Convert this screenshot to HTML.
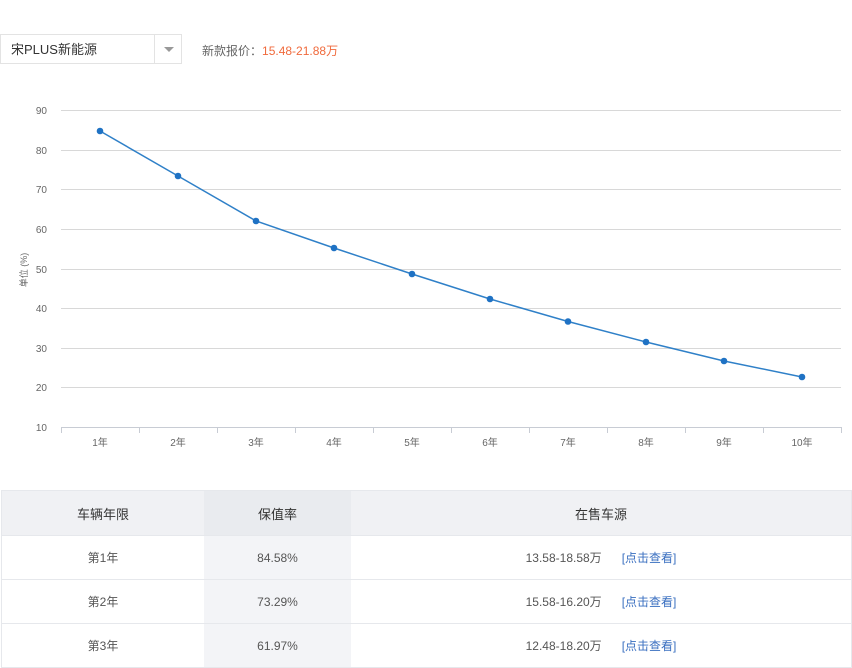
<!DOCTYPE html>
<html><head><meta charset="utf-8"><style>
body{margin:0;width:852px;height:668px;background:#fff;font-family:"Liberation Sans","Noto Sans CJK SC",sans-serif;position:relative;overflow:hidden;color:#333}
.sel{position:absolute;left:0;top:34px;width:182px;height:30px;border:1px solid #e3e3e3;font-size:13px;line-height:30px;box-sizing:border-box}
.sel span{position:absolute;left:10px;top:0}
.sel .ar{position:absolute;left:153px;top:0;width:29px;height:28px;border-left:1px solid #e3e3e3}
.sel .ar:after{content:"";position:absolute;left:9px;top:12px;border:5px solid transparent;border-top:5px solid #999}
.price{position:absolute;left:202px;top:42px;font-size:12px;color:#666}
.price b{font-weight:normal;color:#f06a3c}
table{position:absolute;left:1px;top:490px;border-collapse:collapse;width:851px;font-size:12px;color:#555}
td{border-top:1px solid #e6e8ec;border-bottom:1px solid #e6e8ec;text-align:center;height:43px;padding:0}
tr.h td{background:#f0f1f4;color:#333;font-size:13px;height:44px}
td.c2{background:#f3f4f7;width:147px}
tr.h td.c2{background:#e9ebef}
td.c1{width:202px;border-left:1px solid #e6e8ec}
td.c3{border-right:1px solid #e6e8ec}
a{color:#3a6fc0;text-decoration:none;margin-left:20px}
</style></head><body>
<div class="sel"><span>宋PLUS新能源</span><div class="ar"></div></div>
<div class="price">新款报价：<b>15.48-21.88万</b></div>
<svg style="position:absolute;left:0;top:0" width="852" height="470" font-family="Liberation Sans,Noto Sans CJK SC,sans-serif" font-size="10" fill="#666">
<g stroke="#d8d8d8" stroke-width="1">
<line x1="61" x2="841" y1="110.5" y2="110.5"/><line x1="61" x2="841" y1="150.5" y2="150.5"/><line x1="61" x2="841" y1="189.5" y2="189.5"/><line x1="61" x2="841" y1="229.5" y2="229.5"/><line x1="61" x2="841" y1="269.5" y2="269.5"/><line x1="61" x2="841" y1="308.5" y2="308.5"/><line x1="61" x2="841" y1="348.5" y2="348.5"/><line x1="61" x2="841" y1="387.5" y2="387.5"/>
</g>
<g stroke="#c8ccd4"><line x1="61" x2="841" y1="427.5" y2="427.5"/>
<line x1="61.5" x2="61.5" y1="427" y2="433"/><line x1="139.5" x2="139.5" y1="427" y2="433"/><line x1="217.5" x2="217.5" y1="427" y2="433"/><line x1="295.5" x2="295.5" y1="427" y2="433"/><line x1="373.5" x2="373.5" y1="427" y2="433"/><line x1="451.5" x2="451.5" y1="427" y2="433"/><line x1="529.5" x2="529.5" y1="427" y2="433"/><line x1="607.5" x2="607.5" y1="427" y2="433"/><line x1="685.5" x2="685.5" y1="427" y2="433"/><line x1="763.5" x2="763.5" y1="427" y2="433"/><line x1="841.5" x2="841.5" y1="427" y2="433"/></g>
<g text-anchor="end"><text x="47" y="114">90</text><text x="47" y="154">80</text><text x="47" y="193">70</text><text x="47" y="233">60</text><text x="47" y="273">50</text><text x="47" y="312">40</text><text x="47" y="352">30</text><text x="47" y="391">20</text><text x="47" y="431">10</text></g>
<g text-anchor="middle"><text x="100" y="446">1年</text><text x="178" y="446">2年</text><text x="256" y="446">3年</text><text x="334" y="446">4年</text><text x="412" y="446">5年</text><text x="490" y="446">6年</text><text x="568" y="446">7年</text><text x="646" y="446">8年</text><text x="724" y="446">9年</text><text x="802" y="446">10年</text></g>
<text transform="translate(27,270) rotate(-90)" text-anchor="middle" font-size="9">单位 (%)</text>
<polyline fill="none" stroke="#2f80c8" stroke-width="1.5" points="100,131 178,176 256,221 334,248 412,274 490,299 568,321.5 646,342 724,361 802,377"/>
<g fill="#1f72c4"><circle cx="100" cy="131" r="3.3"/><circle cx="178" cy="176" r="3.3"/><circle cx="256" cy="221" r="3.3"/><circle cx="334" cy="248" r="3.3"/><circle cx="412" cy="274" r="3.3"/><circle cx="490" cy="299" r="3.3"/><circle cx="568" cy="321.5" r="3.3"/><circle cx="646" cy="342" r="3.3"/><circle cx="724" cy="361" r="3.3"/><circle cx="802" cy="377" r="3.3"/></g>
</svg>
<table>
<tr class="h"><td class="c1">车辆年限</td><td class="c2">保值率</td><td class="c3">在售车源</td></tr>
<tr><td class="c1">第1年</td><td class="c2">84.58%</td><td class="c3">13.58-18.58万<a>[点击查看]</a></td></tr>
<tr><td class="c1">第2年</td><td class="c2">73.29%</td><td class="c3">15.58-16.20万<a>[点击查看]</a></td></tr>
<tr><td class="c1">第3年</td><td class="c2">61.97%</td><td class="c3">12.48-18.20万<a>[点击查看]</a></td></tr>
</table>
</body></html>
